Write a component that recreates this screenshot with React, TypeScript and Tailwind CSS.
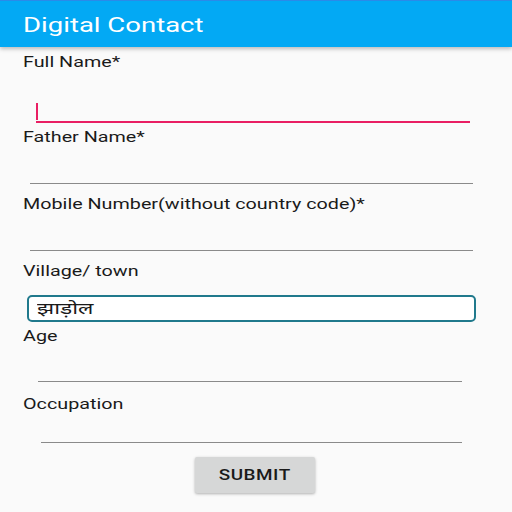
export default function App() {
  return (
    <div
      className="w-[512px] h-[512px] overflow-hidden bg-[#fafafa] flex flex-col"
      style={{ fontFamily: "Roboto, 'Noto Sans', sans-serif" }}
    >
      <div className="h-[47px] shrink-0 bg-[#03a9f4] border-t border-[#2b8ae8] shadow-[0_2px_4px_rgba(0,0,0,0.25)] flex items-center px-[23px] pt-[3px] relative z-10">
        <span className="inline-block origin-left scale-x-[1.31] text-[21px] text-white leading-none">
          Digital Contact
        </span>
      </div>

      <FieldLabel className="mt-[5px]">Full Name*</FieldLabel>
      <div className="ml-[36px] mr-[42px] h-[51px] border-b-2 border-[#e91e63] flex items-end pb-[1px]">
        <span className="w-[2px] h-[17px] bg-[#e91e63]" />
      </div>

      <FieldLabel className="mt-[4px]">Father Name*</FieldLabel>
      <Line className="ml-[30px] mr-[39px] h-[37px]" />

      <FieldLabel className="mt-[10px]">Mobile Number(without country code)*</FieldLabel>
      <Line className="ml-[30px] mr-[39px] h-[37px]" />

      <FieldLabel className="mt-[10px]">Village/ town</FieldLabel>
      <div className="mt-[14px] ml-[27px] mr-[36px] h-[27px] bg-white border-2 border-[#20798c] rounded-[5px] flex items-center pl-[8px]">
        <span className="inline-block origin-left scale-x-[1.42] text-[16px] text-[#1a1a1a] leading-none">
          झाड़ोल
        </span>
      </div>

      <FieldLabel className="mt-[4px]">Age</FieldLabel>
      <Line className="ml-[38px] mr-[50px] h-[36px]" />

      <FieldLabel className="mt-[12px]">Occupation</FieldLabel>
      <Line className="ml-[41px] mr-[50px] h-[29px]" />

      <button
        type="button"
        className="mt-[14px] ml-[195px] w-[120px] h-[36px] bg-[#d6d7d7] rounded-[2px] shadow-[0_1px_3px_rgba(0,0,0,0.3)] flex items-center justify-center"
      >
        <span className="inline-block scale-x-[1.35] text-[14px] font-medium tracking-[0.4px] text-[#1a1a1a] leading-none">
          SUBMIT
        </span>
      </button>
    </div>
  );
}

function FieldLabel({ children, className = "" }: { children: string; className?: string }) {
  return (
    <div className={`ml-[23px] leading-5 ${className}`}>
      <span className="inline-block origin-left scale-x-[1.41] text-[14px] text-[#1a1a1a] whitespace-nowrap">
        {children}
      </span>
    </div>
  );
}

function Line({ className = "" }: { className?: string }) {
  return <div className={`shrink-0 border-b border-[#8a8a8a] ${className}`} />;
}
